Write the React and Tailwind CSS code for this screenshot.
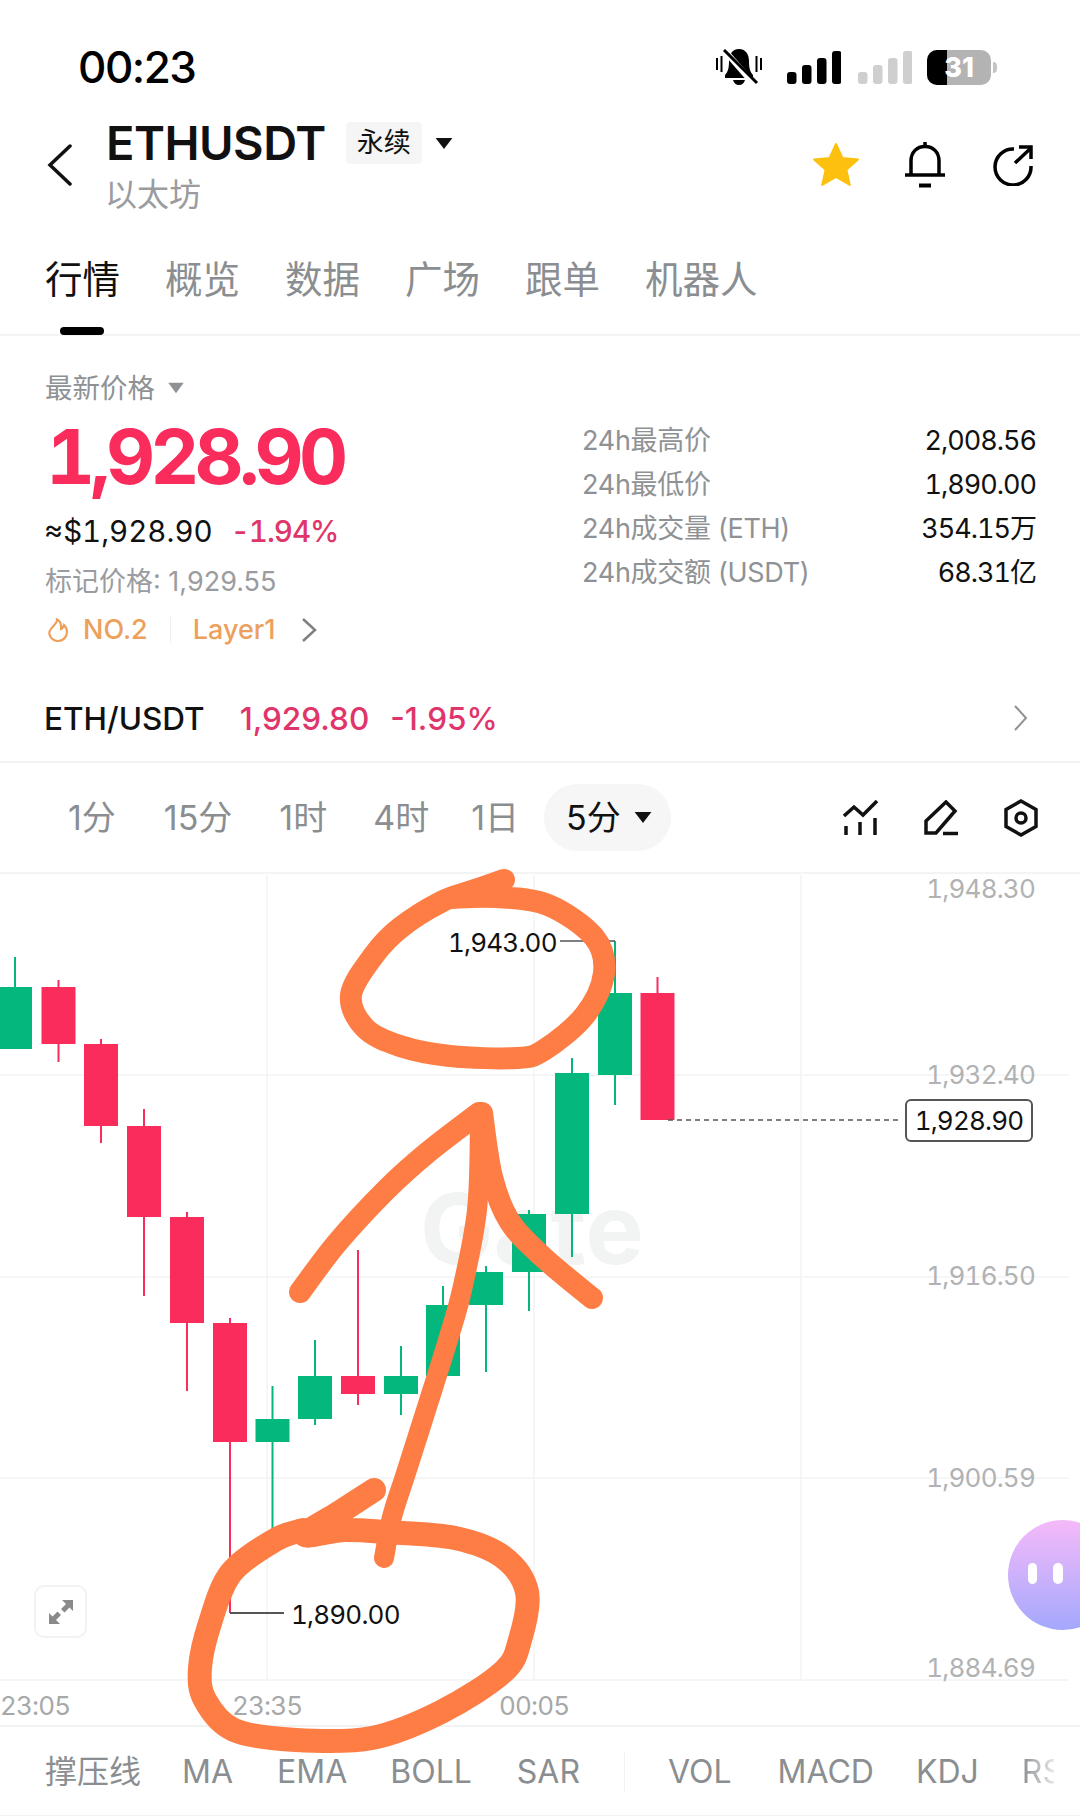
import React from "react";

const RED = "#f92c5c";
const GREEN = "#04b87d";

// x = candle centre, body top/bottom, wick top/bottom
const candles = [
  [15, 987, 1049, 957, 1049, GREEN],
  [58.5, 987, 1044, 980, 1062, RED],
  [101, 1044, 1126, 1039, 1143, RED],
  [144, 1126, 1217, 1109, 1296, RED],
  [187, 1217, 1323, 1212, 1391, RED],
  [230, 1323, 1442, 1318, 1613, RED],
  [272.5, 1419, 1442, 1386, 1540, GREEN],
  [315, 1376, 1419, 1340, 1425, GREEN],
  [358, 1376, 1394, 1250, 1405, RED],
  [401, 1376, 1394, 1346, 1415, GREEN],
  [443, 1305, 1376, 1286, 1376, GREEN],
  [486, 1272, 1305, 1266, 1372, GREEN],
  [529, 1214, 1272, 1210, 1311, GREEN],
  [572, 1073, 1214, 1058, 1257, GREEN],
  [615, 993, 1075, 941, 1105, GREEN],
  [657.5, 993, 1120, 977, 1120, RED],
];

function smooth(pts) {
  let d = `M ${pts[0][0]} ${pts[0][1]}`;
  for (let i = 0; i < pts.length - 1; i++) {
    const p0 = pts[i - 1] || pts[i];
    const p1 = pts[i];
    const p2 = pts[i + 1];
    const p3 = pts[i + 2] || p2;
    const c1 = [p1[0] + (p2[0] - p0[0]) / 6, p1[1] + (p2[1] - p0[1]) / 6];
    const c2 = [p2[0] - (p3[0] - p1[0]) / 6, p2[1] - (p3[1] - p1[1]) / 6];
    d += ` C ${c1[0]} ${c1[1]} ${c2[0]} ${c2[1]} ${p2[0]} ${p2[1]}`;
  }
  return d;
}

const topCircle = [
  [504, 880], [472, 891], [441, 902], [400, 928], [374, 955], [351, 995], [365, 1028], [400, 1046], [450, 1056], [516, 1058],
  [544, 1050], [585, 1015], [604, 973], [594, 937], [548, 905], [496, 897], [450, 898],
];
const leftWing = [[300, 1292], [337, 1243], [386, 1190], [427, 1153], [479, 1113]];
const rightWing = [[482, 1113], [492, 1177], [510, 1222], [544, 1258], [592, 1298]];
const shaft = [[480, 1125], [477, 1210], [462, 1290], [448, 1340], [427, 1407], [406, 1473], [392, 1517], [384, 1558]];
const bottomCircle = [
  [374, 1490], [340, 1512], [305, 1535], [345, 1530], [386, 1532], [455, 1538], [503, 1557], [527, 1592], [520, 1640], [503, 1672],
  [441, 1712], [372, 1738], [296, 1740], [234, 1730], [205, 1700], [200, 1668], [210, 1623], [231, 1573], [275, 1540], [303, 1530],
];

function Triangle({ className }) {
  return (
    <svg className={className} viewBox="0 0 20 14">
      <path d="M1 1h18L10 13z" fill="currentColor" />
    </svg>
  );
}

function StatusIcons() {
  const bars = [[0, 21], [15, 14], [30, 7], [45, 0]];
  return (
    <div className="flex items-center">
      <svg width="46" height="36" viewBox="0 0 46 36" className="mr-[25px]">
        <path d="M23 0c-7 0-10 6-10 12 0 7-1 11-4 14v3h28v-3c-3-3-4-7-4-14 0-6-3-12-10-12z" fill="#000" />
        <path d="M17 31c1 3.500 3 5 6 5s5-1.500 6-5z" fill="#000" />
        <path d="M8 1l29 33" stroke="#fff" strokeWidth="6" />
        <path d="M8 1l33 33" stroke="#000" strokeWidth="3" />
        <path d="M1 9v12M5.500 7v16M40.500 7v16M45 9v12" stroke="#000" strokeWidth="2" />
      </svg>
      <svg width="54" height="33" viewBox="0 0 54 33" className="mr-[17px]">
        {bars.map(([x, y]) => (
          <rect key={x} x={x} y={y} width="9.500" height={33 - y} rx="3" fill="#000" />
        ))}
      </svg>
      <svg width="54" height="33" viewBox="0 0 54 33" className="mr-[15px]">
        {bars.map(([x, y]) => (
          <rect key={x} x={x} y={y} width="9.500" height={33 - y} rx="3" fill="#cfcfcf" />
        ))}
      </svg>
      <div className="relative flex h-[35px] w-[64px] items-center justify-center overflow-hidden rounded-[10px] bg-[#b3b3b3] text-[27px] font-extrabold leading-none text-white">
        <div className="absolute inset-y-0 left-0 w-[20px] bg-black" />
        <span className="relative">31</span>
      </div>
      <div className="ml-[2px] h-[11px] w-[4px] rounded-r-full bg-[#c4c4c4]" />
    </div>
  );
}

function Row({ label, value }) {
  return (
    <div className="flex h-[44px] items-center justify-between">
      <span className="tracking-[-0.300px] text-[#8f9295]">{label}</span>
      <span className="tabular-nums tracking-[-1px] text-[#111]">{value}</span>
    </div>
  );
}

function Flame() {
  return (
    <svg width="22" height="24" viewBox="0 0 22 24" fill="none" stroke="#eda05c" strokeWidth="2.200">
      <path d="M10 1.500c1 4-6 7-7.500 12C1.500 19 6 23 11 23s9-4 9-9c0-3-1.500-5.500-3-7-.5 2-1.500 3.500-3 4 .5-4-1-8-4-9.500z" />
    </svg>
  );
}

export default function App() {
  return (
    <div className="relative h-[1816px] w-[1080px] overflow-hidden bg-white font-['Inter','Noto_Sans_CJK_SC',sans-serif] text-[#111]">
      {/* status bar */}
      <div className="flex h-[120px] items-start justify-between pl-[78px] pr-[83px] pt-[47px]">
        <span className="text-[44px] font-medium leading-[40px] tracking-[-1.500px] text-black">00:23</span>
        <div className="pt-[2px]">
          <StatusIcons />
        </div>
      </div>

      {/* header */}
      <div className="flex h-[96px] items-start pl-[47px] pr-[46px]">
        <svg width="26" height="42" viewBox="0 0 26 42" fill="none" stroke="#111" strokeWidth="3.500" className="mt-[24px]">
          <path d="M23 2L3 21l20 19" strokeLinecap="round" />
        </svg>
        <div className="ml-[33px]">
          <div className="flex items-center">
            <span className="text-[47px] font-semibold leading-[46px] tracking-[-0.500px]">ETHUSDT</span>
            <span className="ml-[20px] flex h-[42px] w-[76px] items-center justify-center rounded-[4px] bg-[#f5f5f5] text-[27px]">永续</span>
            <Triangle className="ml-[12px] h-[13px] w-[20px]" />
          </div>
          <div className="-ml-[1px] mt-[13px] text-[32px] leading-[32px] text-[#9a9c9f]">以太坊</div>
        </div>
        <div className="ml-auto mt-[22px] flex items-center">
          <svg width="48" height="46" viewBox="0 0 24 23">
            <path d="M12 1l3.200 7 7.800.8-5.800 5.100 1.700 7.600-6.900-4-6.900 4 1.700-7.600L1 8.800 8.800 8z" fill="#fdc00f" stroke="#fdc00f" strokeWidth="1" strokeLinejoin="round" />
          </svg>
          <svg width="40" height="46" viewBox="0 0 40 46" fill="none" stroke="#000" strokeWidth="3.500" className="ml-[45px]">
            <path d="M6 32V19C6 10 12 4.500 20 4.500S34 10 34 19v13" />
            <path d="M20 0v4" />
            <path d="M0 33h40" />
            <path d="M14 43.500h12" strokeWidth="4" />
          </svg>
          <svg width="42" height="42" viewBox="0 0 42 42" fill="none" stroke="#000" strokeWidth="3.500" className="ml-[47px]">
            <path d="M22 5A18 18 0 1 0 39 22" />
            <path d="M23 19L39 4" />
            <path d="M27 3h12v12" />
          </svg>
        </div>
      </div>

      {/* tabs */}
      <div className="flex h-[120px] items-start gap-[45px] border-b-2 border-[#f4f4f4] pl-[45px] pt-[44px] text-[37.500px] leading-[40px] text-[#8b8e91]">
        <div className="relative text-[#111]">
          行情
          <div className="absolute left-[15px] top-[67px] h-[8px] w-[44px] rounded-full bg-black" />
        </div>
        <span>概览</span>
        <span>数据</span>
        <span>广场</span>
        <span>跟单</span>
        <span>机器人</span>
      </div>

      {/* price */}
      <div className="flex h-[333px] pl-[45px]">
        <div className="w-[537px]">
          <div className="mt-[38px] flex items-center text-[27.500px] leading-[28px] text-[#8f9295]">
            最新价格
            <Triangle className="ml-[12px] h-[12px] w-[18px]" />
          </div>
          <div className="ml-[1px] mt-[16px] text-[76px] font-bold tabular-nums leading-[76px] tracking-[-4.800px] text-[#f92c5c]">1,928.90</div>
          <div className="mt-[19px] flex items-center text-[29.500px] leading-[36px]">
            <span className="-ml-[1px] tabular-nums">≈$1,928.90</span>
            <span className="ml-[18px] font-medium tabular-nums tracking-[-1px] text-[#e0356a]">-1.94%</span>
          </div>
          <div className="mt-[17px] text-[27px] leading-[32px] text-[#9a9c9f]">标记价格: 1,929.55</div>
          <div className="mt-[16px] flex h-[32px] items-center text-[27px] font-medium text-[#eda05c]">
            <span className="ml-[2px]"><Flame /></span>
            <span className="ml-[14px]">NO.2</span>
            <span className="ml-[22px] h-[26px] w-[1px] bg-[#f0f0f0]" />
            <span className="ml-[22px]">Layer1</span>
            <svg width="16" height="26" viewBox="0 0 16 26" fill="none" stroke="#808080" strokeWidth="2.500" className="ml-[26px]">
              <path d="M2 2l12 11L2 24" />
            </svg>
          </div>
        </div>
        <div className="pt-[83px] text-[27px]">
          <div className="w-[454px]">
            <Row label="24h最高价" value="2,008.56" />
            <Row label="24h最低价" value="1,890.00" />
            <Row label="24h成交量 (ETH)" value="354.15万" />
            <Row label="24h成交额 (USDT)" value="68.31亿" />
          </div>
        </div>
      </div>

      {/* spot row */}
      <div className="flex h-[94px] items-start border-b-2 border-[#f2f2f2] pl-[44px] pr-[52px] pt-[32px] text-[31.500px] leading-[36px]">
        <span className="font-medium">ETH/USDT</span>
        <span className="ml-[35px] font-medium text-[#e0356a]">1,929.80</span>
        <span className="ml-[21px] font-medium text-[#e0356a]">-1.95%</span>
        <svg width="14" height="26" viewBox="0 0 14 26" fill="none" stroke="#8f9295" strokeWidth="2" className="ml-auto mt-[4px]">
          <path d="M1 1l11 12L1 25" />
        </svg>
      </div>

      {/* timeframe row */}
      <div className="flex h-[111px] items-center whitespace-nowrap border-b-2 border-[#f4f4f4] pl-[68px] text-[34px] text-[#8b8e91]">
        <span>1分</span>
        <span className="ml-[48px]">15分</span>
        <span className="ml-[47px]">1时</span>
        <span className="ml-[46px]">4时</span>
        <span className="ml-[42px]">1日</span>
        <div className="ml-[25px] flex h-[67px] w-[127px] shrink-0 items-center rounded-full bg-[#f6f6f6] pl-[22px] text-[#111]">
          5分
          <Triangle className="ml-[12px] h-[13px] w-[20px]" />
        </div>
        <svg width="36" height="36" viewBox="0 0 36 36" fill="none" stroke="#111" strokeWidth="3.500" className="ml-[172px] shrink-0">
          <path d="M1 16l10-9 9 8L34 1" />
          <path d="M3 26v9M17 22v13M32 18v17" />
        </svg>
        <svg width="36" height="36" viewBox="0 0 36 36" fill="none" stroke="#111" strokeWidth="3.500" className="ml-[44px] shrink-0">
          <path d="M3 21L23 2l9 9-19 22H3z" />
          <path d="M20 33.500h15" />
        </svg>
        <svg width="34" height="38" viewBox="0 0 34 38" fill="none" stroke="#111" strokeWidth="3.500" className="ml-[45px] shrink-0">
          <path d="M17 2l15 8.500v17L17 36 2 27.500v-17z" />
          <circle cx="17" cy="19" r="5" />
        </svg>
      </div>

      {/* chart */}
      <div className="relative h-[853px] border-b-2 border-[#f2f2f2] text-[26px] tabular-nums leading-[32px] tracking-[-0.800px]">
        <div className="absolute left-[420px] top-[305px] text-[98px] font-bold leading-[100px] tracking-normal text-[#f2f4f4]">Gate</div>

        <svg className="absolute left-0 top-0 overflow-visible" width="1080" height="853" viewBox="0 874 1080 853">
          <g stroke="#f4f4f4" strokeWidth="1.500">
            <path d="M0 1075H1069M0 1277H1069M0 1478H1069M0 1680H1069" />
            <path d="M267 875V1680M534 875V1680M801 875V1680" />
          </g>
          {candles.map(([x, t, b, wt, wb, c]) => (
            <g key={x} fill={c}>
              <rect x={x - 1} y={wt} width="2" height={wb - wt} />
              <rect x={x - 17} y={t} width="34" height={b - t} />
            </g>
          ))}
          <path d="M560 941H615" stroke="#555" strokeWidth="1.500" />
          <path d="M230 1613H284" stroke="#555" strokeWidth="2" />
          <path d="M668 1120H902" stroke="#555" strokeWidth="1.500" strokeDasharray="5 4" />
        </svg>

        <span className="absolute right-[45px] top-[-1px] text-[#b0b2b4]">1,948.30</span>
        <span className="absolute right-[45px] top-[185px] text-[#b0b2b4]">1,932.40</span>
        <span className="absolute right-[45px] top-[386px] text-[#b0b2b4]">1,916.50</span>
        <span className="absolute right-[45px] top-[588px] text-[#b0b2b4]">1,900.59</span>
        <span className="absolute right-[45px] top-[778px] text-[#b0b2b4]">1,884.69</span>

        <span className="absolute left-[448px] top-[53px] text-[#111]">1,943.00</span>
        <span className="absolute left-[291px] top-[725px] text-[#111]">1,890.00</span>
        <div className="absolute left-[905px] top-[225px] flex h-[43px] w-[128px] items-center justify-center rounded-[6px] border-2 border-[#555] bg-white text-[#111]">
          1,928.90
        </div>

        <span className="absolute left-[0px] top-[816px] text-[#a6a8aa]">23:05</span>
        <span className="absolute left-[232px] top-[816px] text-[#a6a8aa]">23:35</span>
        <span className="absolute left-[499px] top-[816px] text-[#a6a8aa]">00:05</span>

        <div className="absolute left-[34px] top-[711px] flex h-[53px] w-[53px] items-center justify-center rounded-[10px] border-2 border-[#f2f2f2] bg-white">
          <svg width="26" height="26" viewBox="0 0 26 26" fill="#8a8a8a">
            <path d="M14 1h11v11l-3.500-3.500-5 5-3.500-3.500 5-5z" />
            <path d="M12 25H1V14l3.500 3.500 5-5 3.500 3.500-5 5z" />
          </svg>
        </div>

        <div className="absolute left-[1008px] top-[646px] h-[110px] w-[110px] rounded-full bg-gradient-to-b from-[#f5b9f9] to-[#a3a8fd]">
          <div className="absolute left-[20px] top-[43px] h-[21px] w-[9px] rounded-full bg-white" />
          <div className="absolute left-[45px] top-[43px] h-[21px] w-[10px] rounded-full bg-white" />
        </div>

        <svg className="absolute left-0 top-0 overflow-visible" width="1080" height="853" viewBox="0 874 1080 853" fill="none" stroke="#fd7d45" strokeWidth="22" strokeLinecap="round" strokeLinejoin="round">
          <path d={smooth(topCircle)} />
          <path d={smooth(leftWing)} />
          <path d={smooth(rightWing)} />
          <path d={smooth(shaft)} strokeWidth="20" />
          <path d={smooth(bottomCircle)} strokeWidth="24" />
        </svg>
      </div>

      {/* indicators */}
      <div className="flex h-[90px] items-center border-b-2 border-[#f2f2f2] pl-[45px] pt-[2px] text-[32px] text-[#8b8e91]">
        <span>撑压线</span>
        <span className="ml-[41px]">MA</span>
        <span className="ml-[44px]">EMA</span>
        <span className="ml-[43px]">BOLL</span>
        <span className="ml-[45px]">SAR</span>
        <span className="ml-[44px] h-[40px] w-[1px] bg-[#f2f2f2]" />
        <span className="ml-[43px]">VOL</span>
        <span className="ml-[46px]">MACD</span>
        <span className="ml-[42px]">KDJ</span>
        <span className="ml-[43px] w-[32px] overflow-hidden bg-gradient-to-r from-[#8b8e91] to-[#e8e8e8] bg-clip-text text-transparent">RS</span>
      </div>
    </div>
  );
}
